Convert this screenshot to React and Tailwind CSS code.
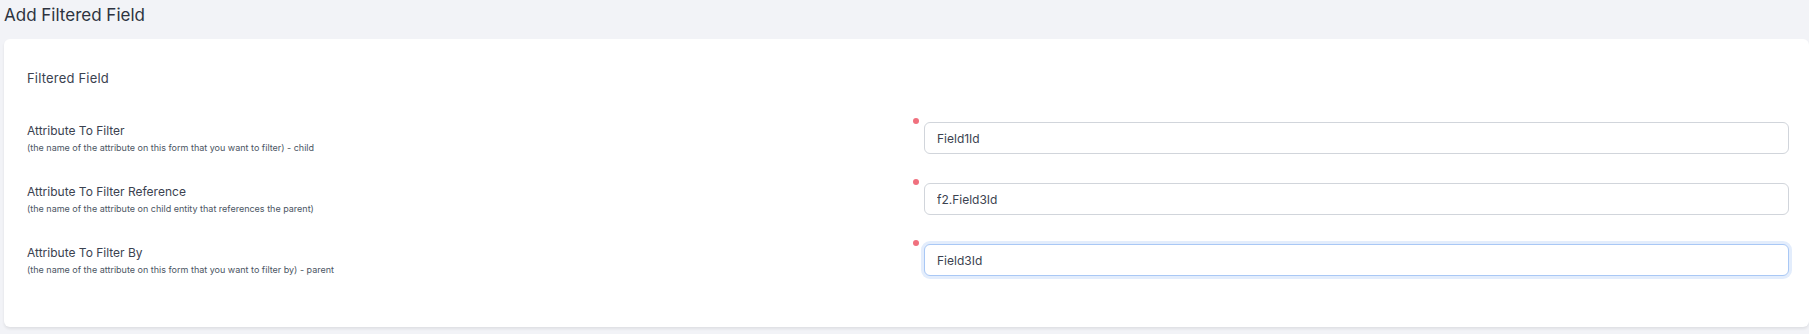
import React from 'react';

const fields = [
  {
    label: 'Attribute To Filter',
    hint: '(the name of the attribute on this form that you want to filter) - child',
    value: 'Field1Id',
  },
  {
    label: 'Attribute To Filter Reference',
    hint: '(the name of the attribute on child entity that references the parent)',
    value: 'f2.Field3Id',
  },
  {
    label: 'Attribute To Filter By',
    hint: '(the name of the attribute on this form that you want to filter by) - parent',
    value: 'Field3Id',
    focused: true,
  },
];

export default function App() {
  return (
    <div className="min-h-[334px] bg-[#f2f3f7] pl-1 font-['Inter','Liberation_Sans',sans-serif] text-[#1f2937]">
      <h1 className="h-[28px] pt-[1px] text-[17px] leading-[28px] text-[#2d3340]">
        Add Filtered Field
      </h1>
      <div className="mt-[11px] rounded-md bg-white pl-[23px] pr-[20px] pt-[29px] pb-[51px] shadow-[0_2px_3px_rgba(0,0,0,0.08)]">
        <h2 className="text-[13px] leading-[20px] tracking-[0.015em] text-[#3b4250]">Filtered Field</h2>
        <div className="mt-[34px] flex flex-col gap-[29px]">
          {fields.map((f) => (
            <div key={f.label} className="flex">
              <div className="flex-1">
                <p className="text-[12px] leading-[18px] text-[#3b4250]">{f.label}</p>
                <p className="mt-[1px] text-[9px] leading-[13px] text-[#4b5563]">{f.hint}</p>
              </div>
              <div className="flex w-[876px]">
                <span className="mt-[-4px] h-[6px] w-[6px] rounded-full bg-[#f0707e]" />
                <input
                  readOnly
                  value={f.value}
                  className={`ml-[5px] h-[32px] flex-1 rounded-md border bg-white px-[12px] text-[12px] text-[#3b4250] outline-none ${
                    f.focused
                      ? 'border-[#a9c8f5] shadow-[0_0_0_3px_#e3edfc]'
                      : 'border-[#d1d5db]'
                  }`}
                />
              </div>
            </div>
          ))}
        </div>
      </div>
    </div>
  );
}
